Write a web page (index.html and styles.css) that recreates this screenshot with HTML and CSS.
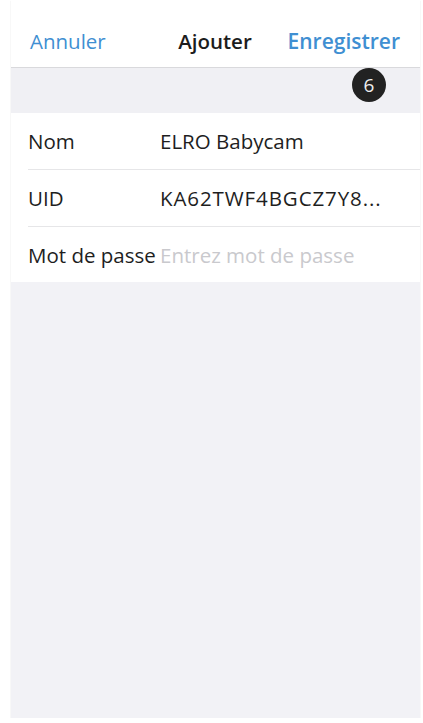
FILE: index.html
```html
<!DOCTYPE html>
<html lang="fr">
<head>
    <meta charset="UTF-8">
    <meta name="viewport" content="width=device-width, initial-scale=1.0">
    <title>Ajouter</title>
    <link rel="stylesheet" href="styles.css">
</head>
<body>

<div class="screen">
    <div class="navbar">
        <span class="nav-link">Annuler</span>
        <span class="nav-title">Ajouter</span>
        <span class="nav-link nav-save">Enregistrer</span>
    </div>

    <div class="band">
        <span class="badge">6</span>
    </div>

    <div class="form">
        <div class="row">
            <span class="label">Nom</span>
            <span class="value">ELRO Babycam</span>
        </div>
        <div class="row">
            <span class="label">UID</span>
            <span class="value uid">KA62TWF4BGCZ7Y8...</span>
        </div>
        <div class="row">
            <span class="label">Mot de passe</span>
            <span class="value placeholder">Entrez mot de passe</span>
        </div>
    </div>

    <div class="filler"></div>
</div>

</body>
</html>
```

FILE: styles.css
```css
body {
    margin: 0;
    background: #fff;
    font-family: "Open Sans", Arial, sans-serif;
}
.screen {
    margin: 0 3px 0 11px;
    height: 718px;
    display: flex;
    flex-direction: column;
    background: #f2f2f6;
    box-shadow: 0 1px 1px rgba(0, 0, 0, 0.18);
}
.navbar {
    height: 68px;
    background: #fff;
    display: grid;
    grid-template-columns: 1fr auto 1fr;
    align-items: center;
    padding: 14px 20px 0 19px;
    border-bottom: 1px solid #d9d9dc;
    box-sizing: border-box;
    font-size: 20.5px;
}
.nav-link {
    color: #3f8fd2;
}
.nav-save {
    justify-self: end;
    font-weight: 600;
    font-size: 21px;
}
.nav-title {
    color: #1c1c1c;
    font-weight: 600;
}
.band {
    position: relative;
    height: 45px;
    background: #f0f0f4;
}
.badge {
    position: absolute;
    top: 0;
    left: 341px;
    width: 34px;
    height: 34px;
    border-radius: 50%;
    background: #222;
    color: #eee;
    font-size: 19px;
    display: flex;
    align-items: center;
    justify-content: center;
}
.form {
    background: #fff;
}
.row {
    display: flex;
    align-items: center;
    height: 57px;
    margin-left: 17px;
    font-size: 20.5px;
    color: #1e1e1e;
    border-bottom: 1px solid #e6e6e8;
    box-sizing: border-box;
}
.row:last-child {
    height: 55px;
    border-bottom: none;
}
.label {
    width: 132px;
    white-space: nowrap;
}
.value {
    white-space: nowrap;
}
.uid {
    letter-spacing: 0.9px;
}
.placeholder {
    color: #c9c9cd;
}
.filler {
    flex: 1;
}
```
